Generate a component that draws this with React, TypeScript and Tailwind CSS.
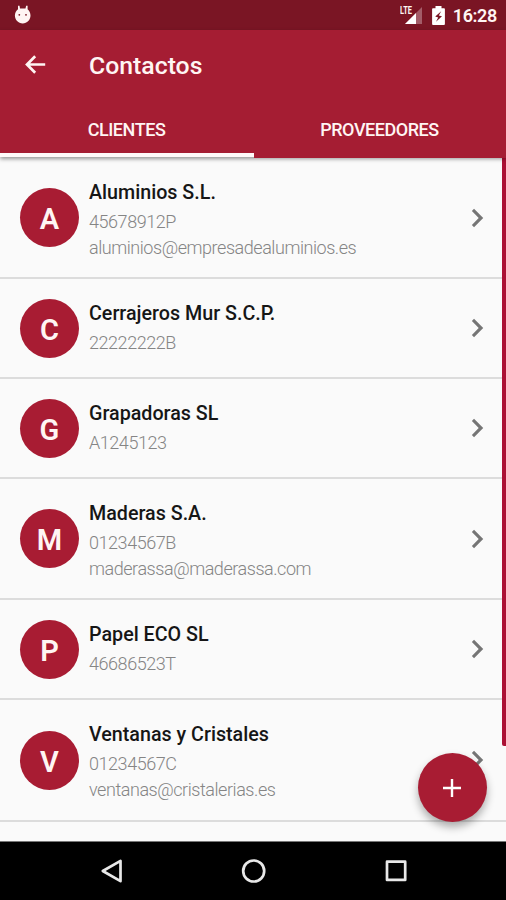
const contacts = [
  { name: 'Aluminios S.L.', id: '45678912P', mail: 'aluminios@empresadealuminios.es', row: 'h-[121px]' },
  { name: 'Cerrajeros Mur S.C.P.', id: '22222222B', mail: '', row: 'h-[100px]' },
  { name: 'Grapadoras SL', id: 'A1245123', mail: '', row: 'h-[100px]' },
  { name: 'Maderas S.A.', id: '01234567B', mail: 'maderassa@maderassa.com', row: 'h-[121px]' },
  { name: 'Papel ECO SL', id: '46686523T', mail: '', row: 'h-[100px]' },
  { name: 'Ventanas y Cristales', id: '01234567C', mail: 'ventanas@cristalerias.es', row: 'h-[122px]' },
];

function StatusBar() {
  return (
    <div className="flex h-[30px] shrink-0 items-center bg-[#7a1524] pl-[14px] pr-[9px] text-[#fff5f3]">
      <svg width="18" height="20" viewBox="0 0 18 20" fill="currentColor">
        <path d="M4 .8h1.500l.5 2.700h5.500l.6-2.700h1.500v3.400c1.800 1.300 2.900 3.700 2.900 6.400 0 4.400-3.400 7.900-7.800 7.900S.9 15 .9 10.600c0-2.700 1.200-5.100 3.100-6.400z" />
        <circle cx="5.300" cy="9.800" r=".9" fill="#7a1524" />
        <circle cx="12" cy="9.800" r=".9" fill="#7a1524" />
      </svg>
      <div className="ml-auto flex items-center">
        <div className="relative h-[20px] w-[24px]">
          <svg className="absolute inset-0" width="24" height="20" viewBox="0 0 24 20">
            <path d="M23 2v17H6z" fill="#a35c68" />
            <path d="M17 8V19H6z" fill="#fff" />
          </svg>
          <span className="absolute left-[1px] top-[1px] origin-left scale-x-[.74] bg-[#7a1524] text-[10px] font-bold leading-[9px]">LTE</span>
        </div>
        <svg className="ml-[9px]" width="13" height="19" viewBox="0 0 13 19">
          <path d="M3.500 0h6v2.200H12a.9.9 0 0 1 .9.900v15a.9.9 0 0 1-.9.900H1a.9.9 0 0 1-.9-.9v-15a.9.9 0 0 1 .9-.9h2.500z" fill="#fff" />
          <path d="m9.200 5.200-6 5.300 3 .9-2.200 4.300 6-5.400-3.200-.8z" fill="#7a1524" />
        </svg>
        <span className="ml-[8px] mt-[2px] text-[18px] font-semibold leading-[20px] tracking-[-.35px]">16:28</span>
      </div>
    </div>
  );
}

function Header() {
  return (
    <header className="relative z-10 flex h-[127px] shrink-0 flex-col bg-[#a51d33] text-[#fff5f3] shadow-[0_2px_4px_rgba(0,0,0,0.4)]">
      <div className="flex h-[70px] shrink-0 items-center pl-[18px]">
        <svg width="34" height="34" viewBox="0 0 24 24" fill="currentColor">
          <path d="M19.200 10.700H8.600l4.200-4.200-1.350-1.350L5 11.600l6.450 6.500 1.350-1.350-4.200-4.200h10.600z" />
        </svg>
        <h1 className="ml-[37px] mt-px text-[24.800px] font-medium leading-[30px]">Contactos</h1>
      </div>
      <nav className="grid grow grid-cols-2 pt-[3px] text-center text-[18px] font-medium leading-[54px] tracking-[-.45px]">
        <div>CLIENTES</div>
        <div>PROVEEDORES</div>
      </nav>
      <div className="absolute bottom-0 left-0 h-[4px] w-[254px] bg-[#fffafa]" />
      <div className="absolute -bottom-px left-[254px] right-0 h-px bg-[#a51d33]" />
    </header>
  );
}

function ContactRow({ contact }: { contact: (typeof contacts)[number] }) {
  return (
    <li className={`flex shrink-0 border-b-2 border-[#dcdcdc] pl-[20px] pr-[12px] ${contact.row}`}>
      <div className="flex size-[59px] shrink-0 items-center justify-center self-center rounded-full bg-[#a81c33] pt-[4px] text-[29px] font-semibold leading-none text-[#fff5f3]">
        {contact.name[0]}
      </div>
      <div className="ml-[10px] grow pt-[22px]">
        <div className="text-[19.700px] font-medium leading-[26px] text-[#161616]">{contact.name}</div>
        <div className="mt-[3px] text-[18px] font-light leading-[26px] tracking-[-.45px] text-[#858585]">{contact.id}</div>
        <div className="text-[18px] font-light leading-[26px] tracking-[-.45px] text-[#858585]">{contact.mail}</div>
      </div>
      <svg className="self-center" width="34" height="34" viewBox="0 0 24 24" fill="#757575">
        <path d="M8.400 17 13.200 12 8.400 7 9.900 5.500l6.500 6.500-6.500 6.500z" />
      </svg>
    </li>
  );
}

export default function App() {
  return (
    <div className="flex h-[900px] w-[506px] flex-col overflow-hidden bg-[#fafafa] font-['Roboto',sans-serif]">
      <StatusBar />
      <Header />
      <main className="relative flex grow flex-col overflow-hidden">
        <ul className="flex flex-col pt-px">
          {contacts.map((c) => (
            <ContactRow key={c.name} contact={c} />
          ))}
        </ul>
        <div className="absolute right-0 top-0 h-[589px] w-[4px] rounded-bl-[2px] bg-[#ab1034]" />
        <button className="absolute left-[418px] top-[596px] flex size-[69px] items-center justify-center rounded-full bg-[#a81c33] shadow-[0_5px_9px_rgba(0,0,0,0.32)]">
          <svg className="-ml-px" width="18" height="18" viewBox="0 0 18 18" fill="#fff">
            <path d="M7.800 0h2.400v7.800H18v2.400h-7.800V18H7.800v-7.800H0V7.800h7.800z" />
          </svg>
        </button>
      </main>
      <footer className="flex h-[59px] shrink-0 items-center border-t border-[#777] bg-black pl-[101px]">
        <svg width="307" height="26" viewBox="0 0 307 26" fill="none" stroke="#e8e8e8" strokeWidth="2.700" strokeLinejoin="round">
          <path d="M1.800 13 19.500 2.800v20.400z" />
          <circle cx="152.700" cy="13" r="10.500" />
          <rect x="286" y="3.700" width="18.200" height="18.200" />
        </svg>
      </footer>
    </div>
  );
}
